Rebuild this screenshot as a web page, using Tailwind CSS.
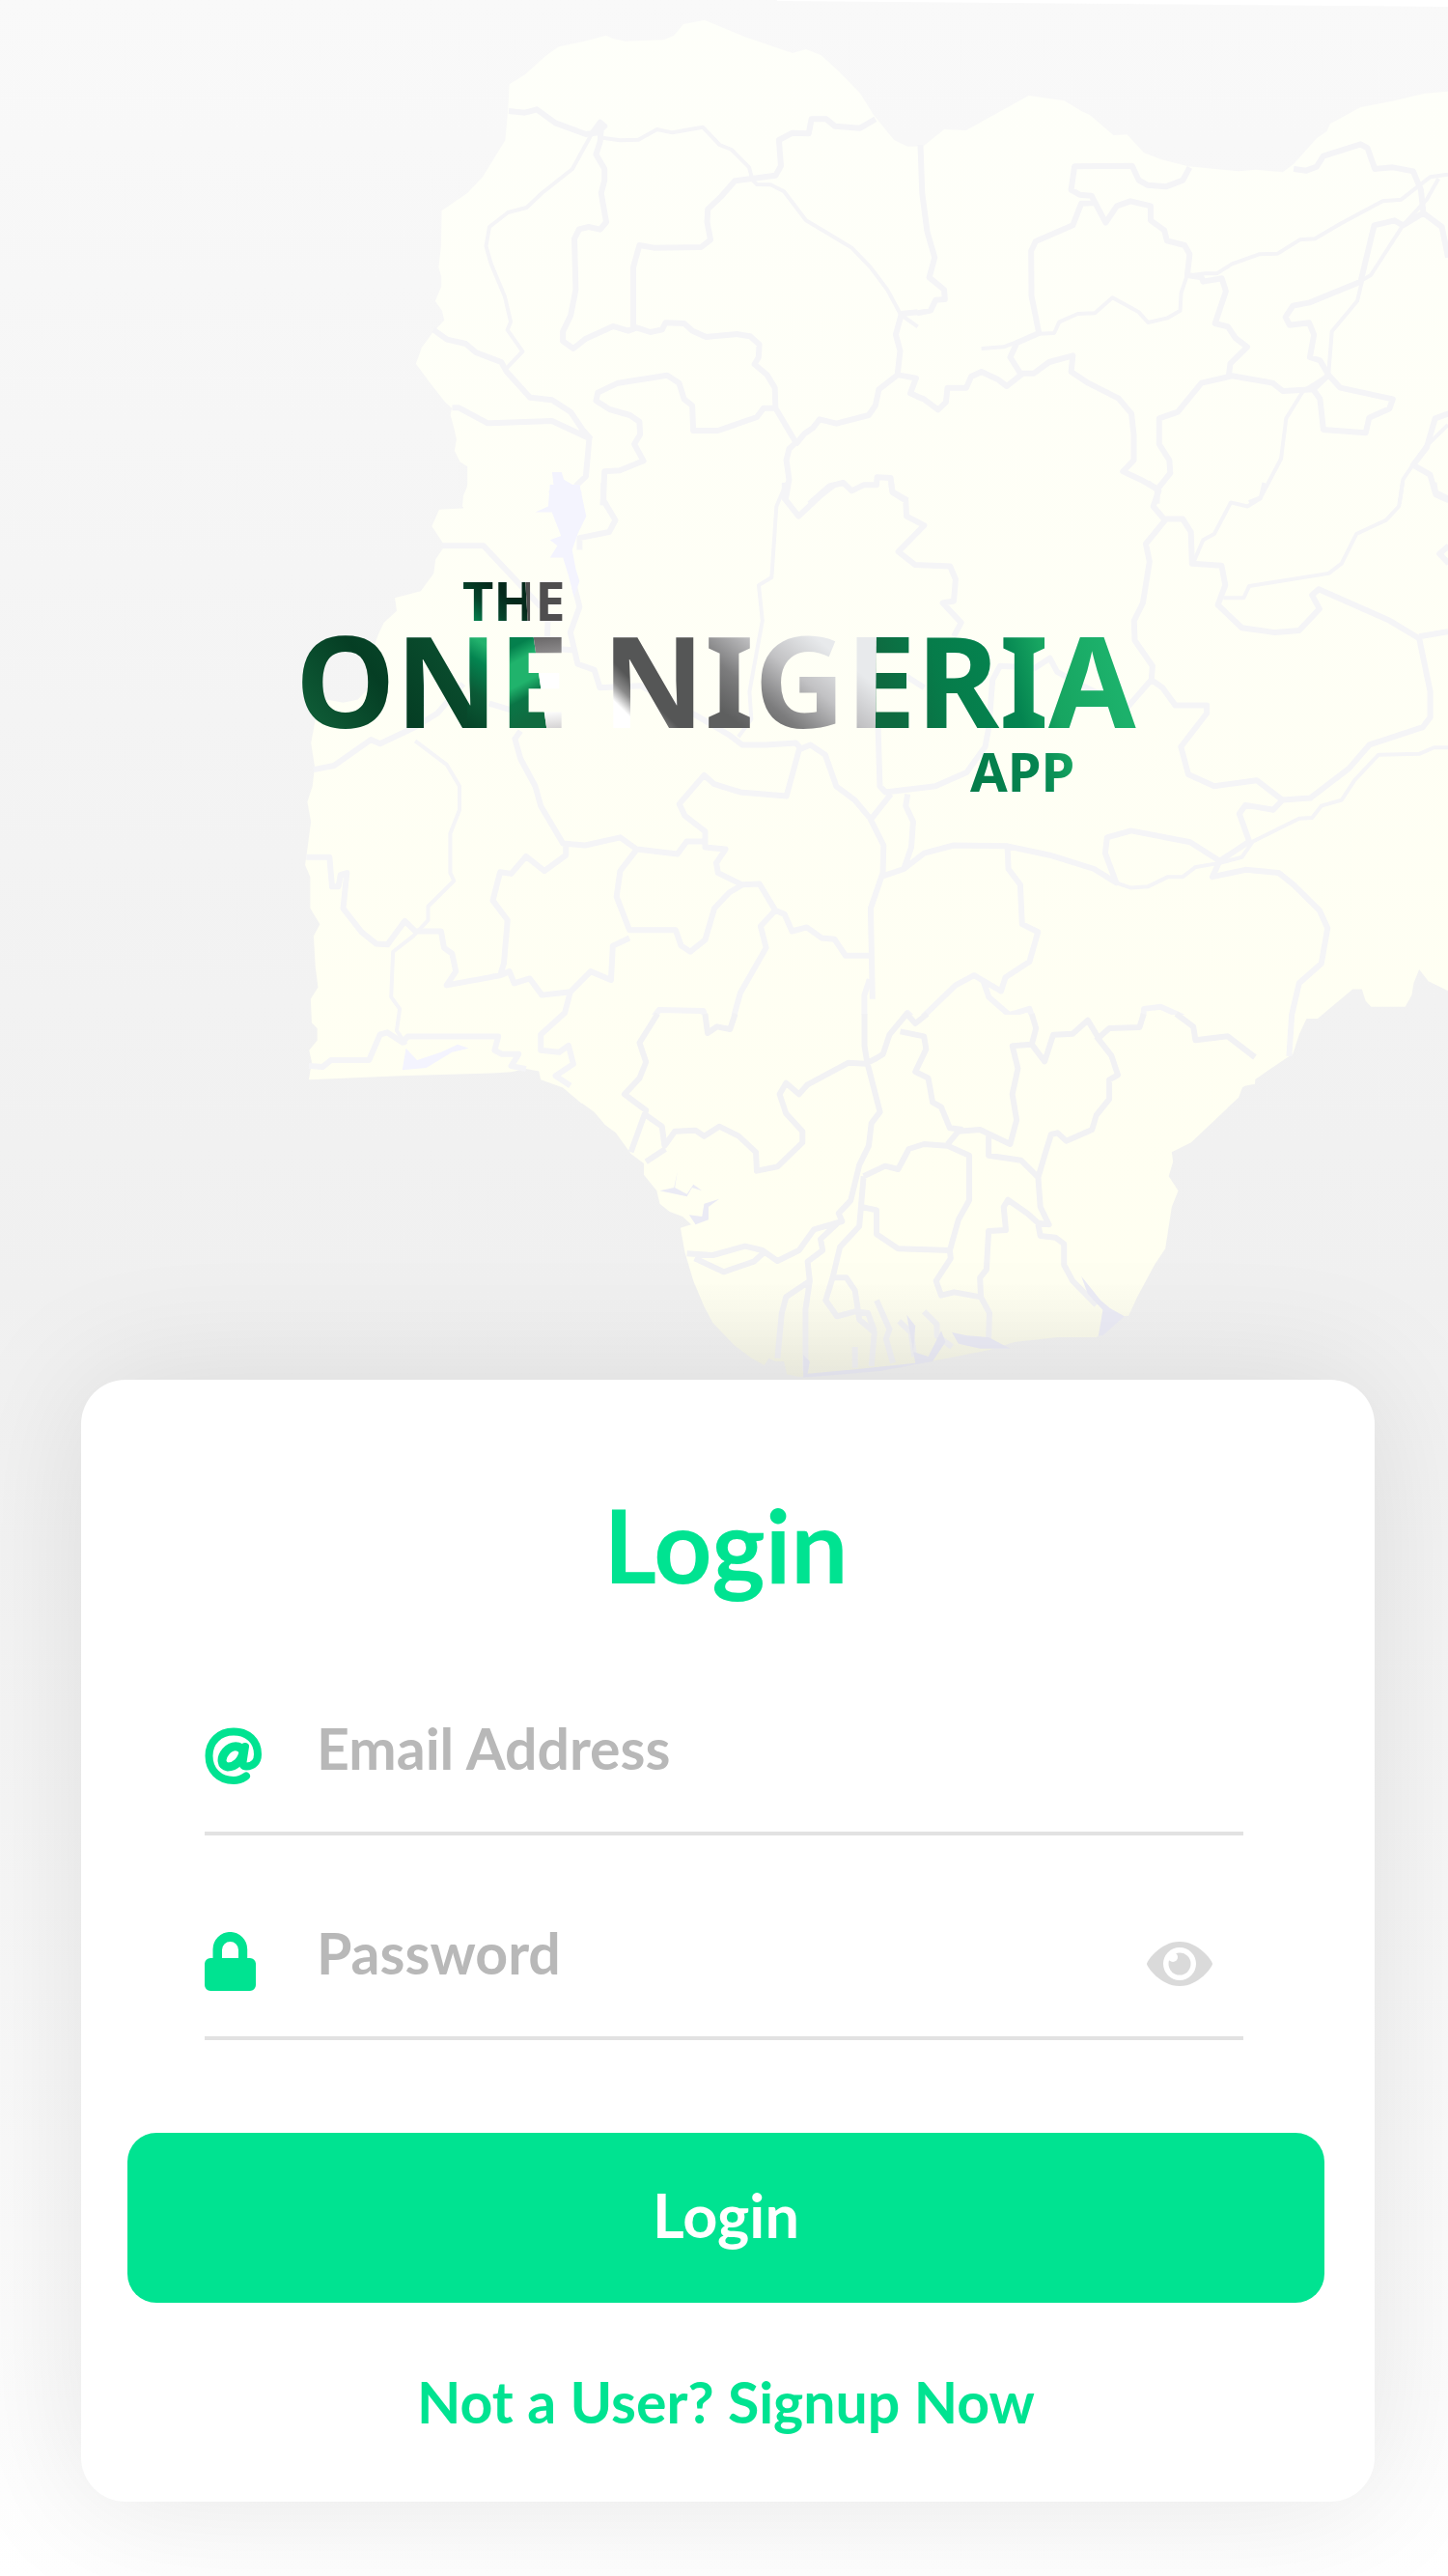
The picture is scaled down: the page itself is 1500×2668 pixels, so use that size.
<!DOCTYPE html>
<html lang="en">
<head>
<meta charset="utf-8">
<meta name="viewport" content="width=device-width, initial-scale=1">
<title>The One Nigeria App – Login</title>
<script src="https://cdn.jsdelivr.net/npm/@tailwindcss/browser@4"></script>
</head>
<body class="relative min-h-screen overflow-x-hidden bg-linear-to-b from-[#f9f9f9] from-0% via-[#f0f0f0] via-50% to-white font-['Lato',sans-serif] font-bold">

<!-- Decorative map -->
<svg class="absolute inset-x-0 top-0 w-full" viewBox="0 0 1500 1430" aria-hidden="true">
  <defs>
    <linearGradient id="landTone" x1="0" y1="0" x2="0" y2="1">
      <stop offset="0" stop-color="#fefffa"/><stop offset=".93" stop-color="#fffff1"/><stop offset="1" stop-color="#f3f3e6"/>
    </linearGradient>
    <clipPath id="land">
      <path transform="translate(400 0) scale(.35077 .33333)" d="M1580 1575L225 1575 228 1540 240 1510 240 1450 218 1435 202 1400 208 1365 198 1320 190 1290 194 1268 175 1250 130 1190 88 1130 105 1080 140 1030 172 995 165 965 145 935 163 890 163 860 155 830 162 765 164 655 240 600 285 550 352 435 360 340 364 262 410 232 470 175 510 145 580 130 650 110 670 120 705 128 820 124 850 110 878 75 940 62 1060 115 1200 165 1240 153 1285 172 1340 225 1400 290 1440 358 1500 435 1540 455 1580 455Z"/>
      <path transform="translate(950 0) scale(.35077 .33333)" d="M-10 455L20 453 80 402 145 405 330 297 435 313 485 345 510 357 580 420 620 418 670 475 720 495 800 517 950 532 1000 527 1080 535 1112 510 1180 430 1210 408 1220 385 1310 333 1400 315 1500 290 1580 283 1580 1575-10 1575Z"/>
      <path transform="translate(300 500) scale(.38265 .40816)" d="M482-10L482 0 470 65 405 68 385 110 420 160 395 195 390 230 355 275 285 292 290 325 255 355 240 385 215 450 215 520 185 550 145 558 100 550 70 600 58 660 68 720 62 770 48 810 58 860 48 930 42 970 56 1000 56 1080 82 1120 65 1150 70 1230 77 1280 57 1310 60 1370 75 1385 75 1415 53 1440 60 1470 52 1515 300 1505 550 1498 600 1495 640 1487 675 1493 680 1515 740 1535 790 1575 1580 1575 1580-10Z"/>
      <path transform="translate(900 500) scale(.38265 .40816)" d="M-10-10L1580-10 1580 1295 1515 1265 1490 1235 1475 1270 1470 1300 1452 1330 1360 1330 1345 1315 1335 1285 1310 1285 1215 1360 1185 1360 1165 1400 1148 1450 1130 1460 1075 1495 1030 1525 1010 1535 985 1575-10 1575Z"/>
      <path transform="translate(600 1050) scale(.44643 .33333)" d="M-5 265L0 272 35 305 60 345 85 370 120 435 150 465 150 500 180 550 187 590 210 615 240 630 260 655 235 665 245 740 265 830 290 910 310 960 360 1030 400 1070 430 1092 440 1070 455 1080 475 1080 482 1120 510 1128 700 1110 780 1090 950 1045 1010 1020 1110 1005 1200 1005 1260 940 1275 938 1295 880 1335 780 1360 730 1375 600 1390 550 1368 505 1378 460 1375 430 1420 400 1530 260 1540 225 1568 218 1580-5-5-5Z"/>
    </clipPath>
    <clipPath id="southWest"><path d="M-10-10H1580V1350H784V1570H-10Z"/></clipPath>
    <clipPath id="southEast"><path d="M-10-10H1580V1570H1045V1350H-10Z"/></clipPath>
  </defs>
  <path fill="#fff" d="M805 0V1L1500 7V0Z"/>
  <rect width="1500" height="1430" fill="url(#landTone)" clip-path="url(#land)"/>

  <!-- State borders and rivers -->
  <g fill="none" stroke="#f5f5f7" stroke-width="6" stroke-linejoin="round">
    <g transform="translate(400 0) scale(.35077 .33333)">
      <path vector-effect="non-scaling-stroke" d="M362 345L410 350 445 340 500 382 590 417 625 412 645 392 632 380 610 412M635 400L632 440 620 480 645 525 645 560 635 600 650 690 632 713 598 705 570 712 556 742 560 900 545 980 522 1030 522 1060 553 1083 590 1052 670 1014 715 1028 740 1018 780 1032 815 1024 825 1003 880 1005 905 1028 945 1047 1035 1038 1075 1045 1102 1070 1100 1110 1088 1132 1125 1165 1148 1205 1150 1270M730 1020L730 830 748 762 790 770 930 768 958 745 948 690 950 650 990 610 1030 562 1080 555 1150 545 1166 515 1160 435 1200 413 1248 415 1256 370 1300 370 1325 392 1400 398 1445 370M140 1025L180 1055 235 1068 265 1095 340 1125 356 1155 425 1235 490 1243 545 1280 580 1335 605 1365M195 1267L215 1267 300 1315 490 1308 600 1362 590 1480 560 1510M640 1570L645 1465 690 1462 760 1432 733 1380 750 1350 748 1310 720 1290 660 1272 620 1245 625 1220 685 1190 830 1166 865 1190 880 1240 904 1260 907 1338 980 1338 1095 1296 1115 1268 1150 1268 1210 1375 1190 1395 1182 1430 1190 1490 1180 1550M1210 1380L1235 1348 1260 1330 1280 1303 1330 1316 1425 1290 1445 1260 1455 1210 1510 1165 1518 1090 1505 1040 1522 975M1250 1565L1310 1510 1350 1500 1375 1525 1410 1507 1448 1507 1450 1483 1490 1485 1495 1528 1540 1555M1512 1165L1565 1175 1548 1222 1570 1232M1520 975L1570 970"/>
      <path stroke-width="4" vector-effect="non-scaling-stroke" d="M605 420L550 525 460 600 415 645 360 660 305 705 295 765 310 820 350 920 368 1000 358 1025 403 1092 355 1145M640 428L690 436 745 434 800 402 845 412 935 395 985 450 1020 465 1072 520 1082 560 1095 573 1135 574 1175 595 1240 685 1300 722 1375 770 1430 830 1480 900 1520 978 1570 1015"/>
    </g>
    <g transform="translate(950 0) scale(.35077 .33333)">
      <path vector-effect="non-scaling-stroke" d="M10 450L15 600 30 720 52 800 36 862 80 900 82 930 55 932 40 965 0 973M805 520L785 560 735 580 680 575 655 560 635 515 465 517 455 590 480 605 515 608 557 692 590 640 630 625 690 640 690 685 730 715 738 748 790 762 805 790 798 855 840 862 845 875 900 865 912 905 880 1005 918 1015 940 1050 975 1078 925 1130 920 1170M530 630L485 632 460 700 350 750 337 780 338 920 360 1035 295 1065 275 1110 305 1160 345 1160 390 1125 460 1105 455 1155 505 1190 595 1238 633 1285 640 1350 640 1430 608 1465 660 1490 710 1520 748 1470 745 1430 715 1380 715 1300 770 1280 840 1190 930 1168 1050 1190 1080 1215 1170 1210 1215 1165 1250 1205 1405 1240 1395 1270 1335 1298 1325 1345 1200 1335 1190 1240 1170 1210M1215 1165L1190 1120 1160 1110 1172 1040 1158 1003 1100 1010 1088 985 1110 950 1160 940 1310 875 1350 700 1410 685 1435 700 1495 662 1550 705 1568 800M1112 525L1150 530 1180 518 1200 485 1310 448 1330 460 1352 525 1405 520 1465 532 1488 590 1495 660M310 1162L265 1200 240 1180 190 1155 160 1170 145 1205 90 1205 85 1250 62 1273 20 1240 0 1232M710 1520L708 1565M1570 1285L1530 1300 1505 1390 1465 1445 1515 1475 1530 1530 1570 1550"/>
      <path stroke-width="4" vector-effect="non-scaling-stroke" d="M190 1083L255 1078 360 1037 405 1035 420 1000 475 975 525 973 577 925 655 970 682 1002 740 988 777 965 780 910 797 857 850 850 885 850 930 820 1010 790 1065 788 1130 745 1175 742 1250 695 1375 625 1430 620 1515 550 1568 542M1540 555L1505 620 1435 700 1340 855 1315 870 1300 935 1225 1030 1215 1165 1140 1215 1090 1300 1075 1425 1015 1545 980 1560M1568 1320L1500 1390 1435 1490 1425 1565"/>
    </g>
    <g transform="translate(300 500) scale(.38265 .40816)" clip-path="url(#southWest)">
      <path vector-effect="non-scaling-stroke" d="M415 160L525 160 630 265 680 315M850 0L850 45 882 95 865 125 785 140 785 170M770 260L785 315 760 380 780 460 825 475 840 520 950 515 1100 590 1190 640 1225 665 1290 665 1370 660 1385 675 1410 665 1450 690 1480 770 1530 805 1570 850M700 330L697 400 710 420 770 425M1380 675L1345 795 1220 785 1150 765 1122 742 1055 815 1070 845 1125 885 1125 925 1180 930 1155 965 1160 990 1225 1020 1190 1040 1150 1080 1125 1160 1085 1190 1060 1175 1045 1135 920 1135 885 1050 895 985 940 930M65 728L120 718 220 652 245 662 340 620 400 585 470 510M540 560L610 580M625 630L610 650 625 700 665 770 680 820 740 915 800 920 895 900 940 930 1050 942 1075 910 1125 910M748 920L748 945 690 985 640 948 600 992 570 988 550 1060 590 1110 580 1220 570 1250 425 1275 450 1240 440 1195 418 1180 410 1138 340 1138 312 1112 290 1140 265 1172 235 1170 195 1140 145 1080 155 990 138 995 132 1025 115 1025 108 950 45 950M570 1250L595 1240 608 1270 650 1258 683 1300 760 1292 815 1240 870 1262 875 1175 920 1155M760 1292L745 1345 680 1400 680 1440 730 1445 755 1428 768 1475 720 1505 760 1530M1225 1020L1272 1018 1315 1085 1275 1125 1290 1180 1220 1295 1195 1380 1135 1390 1120 1340 1000 1338 950 1400 965 1465 905 1555 960 1590M1315 1085L1340 1095 1360 1138 1400 1128 1440 1155 1475 1158 1505 1200 1570 1200M52 1480L90 1482 112 1465 215 1465 245 1400 265 1395 305 1420 320 1405 565 1405 555 1440 575 1450 620 1450 600 1480 640 1487M1570 1260L1556 1300 1556 1360M1340 0L1340 40 1378 85 1440 30 1475 5"/>
      <path stroke-width="4" vector-effect="non-scaling-stroke" d="M1345 0L1318 60 1305 240 1270 260 1280 350 1245 530 1250 600 1215 645M340 655L425 715 460 770 460 830 435 890 435 990 445 1010 375 1075 375 1110 335 1150 280 1190 275 1305 298 1335 290 1390 315 1425"/>
    </g>
    <g transform="translate(900 500) scale(.38265 .40816)" clip-path="url(#southEast)">
      <path vector-effect="non-scaling-stroke" d="M60 0L65 25 100 45 102 85 150 108 80 175 125 208 220 212 235 245 230 300 200 305 250 355 230 390M25 620L30 770 45 785 180 770 265 735 315 670 325 620 335 500 355 465 450 470 490 445 510 480 600 525 700 570 765 500 795 520 830 565 915 565 915 585 845 670 865 740 935 770 1050 755 1120 805 1095 830 1020 818 1003 840 1030 910 950 960 930 1000 1020 982 1110 990 1150 1020 1220 1085 1242 1130 1225 1220 1165 1270 1145 1350 1138 1455M755 0L785 20 770 60 802 95 750 155 760 200 742 305 718 350 720 400 768 465 765 500M802 92L850 92 872 125 875 205 955 210 965 260 945 310 1010 368 1100 380 1165 375 1220 320 1200 285 1218 270 1410 350 1490 395 1520 530 1520 595 1500 620 1355 665 1300 725 1195 800 1120 805M1490 390L1568 378M60 790L5 855 40 920 38 990 5 1080 10 1310M105 790L100 820 120 860 115 925 95 980M38 998L95 980 150 940 230 920 375 922 490 945 610 980 670 1015 640 940 645 900 710 883 870 912 950 960M375 922L378 980 410 1020 415 1120 458 1140 435 1215 370 1255 358 1290 285 1250 235 1275 130 1370 105 1345 80 1390M310 1265L325 1305 380 1350 435 1335 452 1380M640 1400L660 1385 740 1380 745 1335 790 1330 850 1355 882 1385M1530 0L1535 30 1570 45M1570 160L1545 180 1570 205M0 490L100 490 150 520"/>
      <path stroke-width="4" vector-effect="non-scaling-stroke" d="M1070 0L1060 40 1025 60 980 50 935 130 905 145 880 200M1445 0L1435 60 1400 95 1320 130 1280 205 1245 230 1030 262 1015 292 960 292M670 1015L710 1028 755 1025 810 1000 850 1000 885 975 950 965 1010 950 1040 910 1165 852 1200 850 1225 820 1280 805 1315 755 1380 690 1490 688 1530 672 1570 672"/>
    </g>
    <g transform="translate(600 1050) scale(.44643 .33333)" stroke="#f2f2f4">
      <path vector-effect="non-scaling-stroke" d="M662 0L662 100 668 150 698 305 678 340 672 410 650 470 630 580 602 620 610 645 545 670 510 735 460 768 425 735 385 722 310 750 250 745M182 0L140 90 155 150 140 200 105 250 155 300 120 430M155 315L192 350 198 410 222 365 270 362 290 380 325 350 370 380 410 430 412 488 460 475 518 400 518 365 480 310 465 250 480 215 510 250 530 220 625 152 665 155 690 138 705 125 720 65 760 0 780 30 808 0M200 420L155 460M268 760L335 802 405 770 430 740M660 505L710 473 740 483 765 420 800 405 855 410 905 440 905 580 880 640 860 735 740 730 690 685 690 610 655 600M660 505L650 660 605 725 588 820 620 820 640 860 650 950 685 990 678 1095M855 405L880 365 930 360 1000 405 1015 330 1005 250 1018 170 1005 100 1050 95M745 55L800 70 805 110 780 180 810 200 820 275 840 290 860 355 890 360M950 380L950 440 1025 455 1065 508 1070 600 1090 655 1065 650 1040 620 995 578 985 600 990 672 950 675 945 795 930 820 932 880 870 865 840 875 828 830 862 760 860 735M1065 508L1080 440 1095 375 1110 370 1130 395 1190 360 1200 315 1230 265 1230 205 1250 190 1235 130 1200 70M1065 655L1070 690 1105 695 1125 715 1125 780 1145 830 1200 905M932 880L952 930 950 1010M588 820L572 890 598 940 640 925 670 930 685 985M600 650L560 700 565 735 530 770 535 830 480 880 470 930 460 1070M535 830L525 920 525 1110M640 1100L640 1035M690 890L720 980 712 1010 728 1085M742 955L770 990 778 1065M800 925L830 965 830 1000 865 1035M292 0L298 60 320 40 350 48 362 0M1050 0L1060 45 1050 95 1080 148 1100 65 1145 62 1180 20 1205 75 1230 45 1300 42 1310 0M1385 0L1425 40 1430 82 1505 70 1568 135"/>
    </g>
  </g>
  <!-- Lakes and lagoons -->
  <g fill="#f4f4fe">
    <path transform="translate(400 0) scale(.35077 .33333)" d="M490 1467L518 1467 525 1490 565 1515 578 1530 565 1565 500 1565 480 1528 495 1510Z"/>
    <path transform="translate(300 500) scale(.38265 .40816)" d="M705 5L785 5 803 85 780 130 765 170 775 220 785 250 770 290 755 235 740 190 705 190 725 160 705 145 735 135 710 75 665 75 700 60ZM315 1435L345 1465 410 1445 455 1425 485 1435 440 1445 370 1485 305 1490Z"/>
    <path fill="#ebebf5" transform="translate(600 1050) scale(.44643 .33333)" d="M1165 815L1210 890 1232 915 1265 940 1215 1000 1205 1000 1215 920 1180 870ZM865 990L900 1000 950 1005 1000 1040 930 1040 880 1025ZM760 935L780 970 775 1050 810 1065 840 985 850 1020 820 1080 700 1110 520 1130 520 1060 535 1080 530 1118 640 1105 780 1085ZM187 550L220 540 228 490 222 540 250 560 265 530 285 550 262 540 250 568ZM255 625L285 630 290 590 325 575 300 600 300 640 270 655Z"/>
  </g>
</svg>

<div class="relative flex min-h-screen flex-col pb-[79px] pl-[84px] pr-[76px]">
  <header class="h-[1429px]">
    <svg class="mx-auto mt-[580px] w-[920px] max-w-full" viewBox="294 580 920 260" role="img" aria-label="The One Nigeria App">
      <defs>
        <linearGradient id="deep" x1="312" y1="754" x2="460" y2="640" gradientUnits="userSpaceOnUse">
          <stop offset="0" stop-color="#106039"/><stop offset=".5" stop-color="#053e24"/><stop offset="1" stop-color="#0b5030"/>
        </linearGradient>
        <linearGradient id="sheen" x1="465" y1="750" x2="530" y2="650" gradientUnits="userSpaceOnUse">
          <stop offset="0" stop-color="#053f25"/><stop offset=".35" stop-color="#0b5a36"/><stop offset=".6" stop-color="#048450"/><stop offset=".75" stop-color="#22b26d"/><stop offset="1" stop-color="#1fae69"/>
        </linearGradient>
        <linearGradient id="sheen2" x1="535" y1="668" x2="570" y2="735" gradientUnits="userSpaceOnUse">
          <stop offset="0" stop-color="#04804d"/><stop offset=".2" stop-color="#20b36c"/><stop offset=".5" stop-color="#20b36c"/><stop offset=".7" stop-color="#0a7546"/><stop offset="1" stop-color="#106b40"/>
        </linearGradient>
        <linearGradient id="ash" x1="570" y1="660" x2="580" y2="754" gradientUnits="userSpaceOnUse">
          <stop offset="0" stop-color="#6c6a6b"/><stop offset=".16" stop-color="#8a8889"/><stop offset=".3" stop-color="#fff"/><stop offset=".8" stop-color="#fff"/><stop offset="1" stop-color="#d5d3d4"/>
        </linearGradient>
        <linearGradient id="steel" x1="640" y1="740" x2="665" y2="715" gradientUnits="userSpaceOnUse">
          <stop offset="0" stop-color="#fff"/><stop offset=".2" stop-color="#fff"/><stop offset=".6" stop-color="#8a8a8a"/><stop offset="1" stop-color="#555656"/>
        </linearGradient>
        <linearGradient id="silver" x1="770" y1="754" x2="845" y2="660" gradientUnits="userSpaceOnUse">
          <stop offset="0" stop-color="#5e5f5f"/><stop offset=".3" stop-color="#7c7c7d"/><stop offset=".65" stop-color="#c2c2c4"/><stop offset="1" stop-color="#e8eaec"/>
        </linearGradient>
        <linearGradient id="leaf" x1="930" y1="754" x2="1150" y2="690" gradientUnits="userSpaceOnUse">
          <stop offset="0" stop-color="#0e6a40"/><stop offset=".25" stop-color="#067c4a"/><stop offset=".55" stop-color="#048450"/><stop offset=".72" stop-color="#17a561"/><stop offset="1" stop-color="#1cb16b"/>
        </linearGradient>
        <linearGradient id="night" x1="490" y1="643" x2="515" y2="610" gradientUnits="userSpaceOnUse">
          <stop offset="0" stop-color="#06834f"/><stop offset=".5" stop-color="#05432a"/><stop offset="1" stop-color="#04291b"/>
        </linearGradient>
        <pattern id="flag" x="280" y="580" width="920" height="260" patternUnits="userSpaceOnUse" viewBox="280 580 920 260">
          <path fill="url(#deep)" d="M280 580H486V840H280Z"/>
          <path fill="url(#sheen)" d="M484 655H516V840H484Z"/>
          <path fill="url(#sheen2)" d="M516 655H552L567 760H516Z"/>
          <path fill="url(#ash)" d="M552 655H612V760H567Z"/>
          <path fill="url(#steel)" d="M612 655H732V760H612Z"/>
          <path fill="url(#silver)" d="M730 655H908V760H730Z"/>
          <path fill="url(#leaf)" d="M908 655H1200V840H906Z"/>
          <path fill="url(#night)" d="M280 580H543L547 650H280Z"/>
          <path fill="#4f4e4f" d="M543 580H640V650H547Z"/>
        </pattern>
      </defs>
      <g fill="url(#flag)" class="font-['Noto_Sans',sans-serif] font-bold">
        <text x="479" y="643" font-size="56">THE</text>
        <text x="306" y="754" font-size="131">ONE NIGERIA</text>
        <text x="1005" y="820" font-size="56">APP</text>
      </g>
    </svg>
  </header>

  <main class="rounded-[46px] bg-white pt-[118px] pr-[52px] pb-[67px] pl-12 shadow-[0_0_140px_rgba(0,0,0,0.10)]">
    <h1 class="text-center text-[105px] leading-[104px] text-[#00e391]">Login</h1>

    <form class="mt-[108px]">
      <div class="mr-[84px] ml-20 flex h-[142px] items-start border-b-4 border-[#e2e2e2] pr-8">
        <label for="email" class="w-[116px] shrink-0 pt-[30px]">
          <svg class="h-[60px] w-[60px]" viewBox="0 0 60 60" fill="none" stroke="#00e391" role="img" aria-label="Email Address">
            <path stroke-width="8" stroke-linecap="round" d="M43 50.500C39 53.500 35 55 30 55C15 55 4.500 44.500 4.500 29.500C4.500 15 15 4.500 30 4.500C45 4.500 55 14 55 28C55 36 50 40.500 43 40.500C40 40.500 39 38.500 39.500 36L42 20"/>
            <path stroke-width="9" d="M40 25C37 18 28 18 22 25C16 32 17 40 24 41C32 41 39 34 40 25Z"/>
          </svg>
        </label>
        <input id="email" type="email" placeholder="Email Address" class="h-[102px] min-w-0 flex-1 text-[59px] font-bold text-[#555] outline-none placeholder:text-[#b8b8b8]">
      </div>

      <div class="mt-[70px] mr-[84px] ml-20 flex h-[142px] items-start border-b-4 border-[#e2e2e2] pr-8">
        <label for="password" class="w-[116px] shrink-0 pt-[30px]">
          <svg class="h-[61px] w-[53px]" viewBox="0 0 53 61" fill="#00e391" role="img" aria-label="Password">
            <path fill-rule="evenodd" d="M8.500 27V18a17.800 18 0 0 1 35.700 0V27H47a6 6 0 0 1 6 6V55a6 6 0 0 1-6 6H6a6 6 0 0 1-6-6V33a6 6 0 0 1 6-6ZM18 27H35V18.500a8.500 8.500 0 0 0-17 0Z"/>
          </svg>
        </label>
        <input id="password" type="password" placeholder="Password" class="h-[102px] min-w-0 flex-1 text-[59px] font-bold text-[#555] outline-none placeholder:text-[#b8b8b8]">
        <button type="button" aria-label="Show password" class="pt-10">
          <svg class="h-[46px] w-[68px]" viewBox="0 0 68 46" aria-hidden="true">
            <path fill="#dadada" d="M0 23C0 20 14 0 34 0S68 20 68 23S54 46 34 46S0 26 0 23Z"/>
            <circle cx="34" cy="23" r="17" fill="#fff"/>
            <circle cx="34" cy="23" r="11.500" fill="#dadada"/>
            <circle cx="27" cy="16" r="5" fill="#fff"/>
          </svg>
        </button>
      </div>

      <button type="submit" class="mt-[96px] block h-44 w-full rounded-[30px] bg-[#00e391] pb-1.5 text-[63px] font-bold text-white">Login</button>
    </form>

    <p class="mt-[67px] text-center text-[59px] leading-[72px]"><a href="#signup" class="text-[#00e391]">Not a User? Signup Now</a></p>
  </main>
</div>
</body>
</html>
